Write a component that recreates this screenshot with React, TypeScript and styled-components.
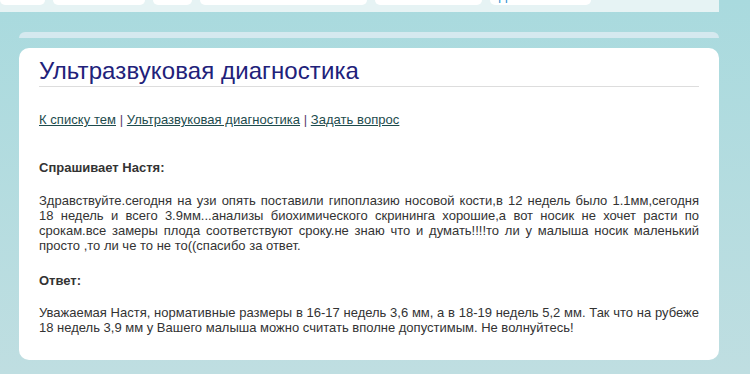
import React from "react";
import styled, { createGlobalStyle } from "styled-components";

const GlobalStyle = createGlobalStyle`
    body {
        margin: 0;
        font-family: "Liberation Sans", Arial, sans-serif;
    }
`;

const Page = styled.div`
    min-height: 374px;
    background: linear-gradient(#a9dade, #bfdee1);
`;

const Wrapper = styled.div`
    width: 719px;
`;

const TopBar = styled.div`
    display: flex;
    gap: 8px;
    height: 12px;
    background-color: #e6f3f4;
`;

const Tab = styled.div<{ $width: number }>`
    width: ${p => p.$width}px;
    height: 5px;
    overflow: hidden;
    background-color: #ffffff;
    border-radius: 0 0 6px 6px;
`;

const TabLabel = styled.span`
    display: block;
    margin: -11px 0 0 9px;
    font-size: 12px;
    line-height: 14px;
    color: #2a8fd0;
`;

const Main = styled.div`
    padding: 20px 0 14px 19px;
`;

const Shelf = styled.div`
    height: 6px;
    background-color: #d5e9ef;
    border-radius: 6px 6px 0 0;
`;

const Card = styled.div`
    margin-top: 10px;
    padding: 9px 20px 24px;
    background-color: #ffffff;
    border-radius: 10px;
    color: #333333;
    font-size: 13px;
    line-height: 15.3px;
`;

const Title = styled.h1`
    margin: 0;
    padding-bottom: 2px;
    border-bottom: 1px solid #dddddd;
    font-size: 24px;
    font-weight: normal;
    line-height: 27px;
    letter-spacing: 0.1px;
    color: #21217a;
`;

const Crumbs = styled.div`
    margin-top: 25px;
    color: #5a4070;
    letter-spacing: 0.05px;
`;

const Crumb = styled.a`
    color: #1d4b4d;
    text-decoration: underline;
`;

const Label = styled.p<{ $top: number }>`
    margin: ${p => p.$top}px 0 0;
    font-weight: bold;
`;

const Text = styled.p`
    margin: 17px 0 0;
    text-align: justify;
`;

const tabs = [45, 92, 39, 167, 107, 101];

function App() {
    return (
        <Page>
            <GlobalStyle />
            <Wrapper>
                <TopBar>
                    {tabs.map((w, i) => (
                        <Tab $width={w} key={i}>
                            {i === tabs.length - 1 && <TabLabel>Диагностика</TabLabel>}
                        </Tab>
                    ))}
                </TopBar>
                <Main>
                    <Shelf />
                    <Card>
                        <Title>Ультразвуковая диагностика</Title>
                        <Crumbs>
                            <Crumb href="#">К списку тем</Crumb> |{" "}
                            <Crumb href="#">Ультразвуковая диагностика</Crumb> |{" "}
                            <Crumb href="#">Задать вопрос</Crumb>
                        </Crumbs>
                        <Label $top={33}>Спрашивает Настя:</Label>
                        <Text>
                            Здравствуйте.сегодня на узи опять поставили гипоплазию носовой кости,в 12
                            недель было 1.1мм,сегодня 18 недель и всего 3.9мм...анализы биохимического
                            скрининга хорошие,а вот носик не хочет расти по срокам.все замеры плода
                            соответствуют сроку.не знаю что и думать!!!!то ли у малыша носик маленький
                            просто ,то ли че то не то((спасибо за ответ.
                        </Text>
                        <Label $top={19}>Ответ:</Label>
                        <Text>
                            Уважаемая Настя, нормативные размеры в 16-17 недель 3,6 мм, а в 18-19 недель
                            5,2 мм. Так что на рубеже 18 недель 3,9 мм у Вашего малыша можно считать
                            вполне допустимым. Не волнуйтесь!
                        </Text>
                    </Card>
                </Main>
            </Wrapper>
        </Page>
    );
}

export default App;
